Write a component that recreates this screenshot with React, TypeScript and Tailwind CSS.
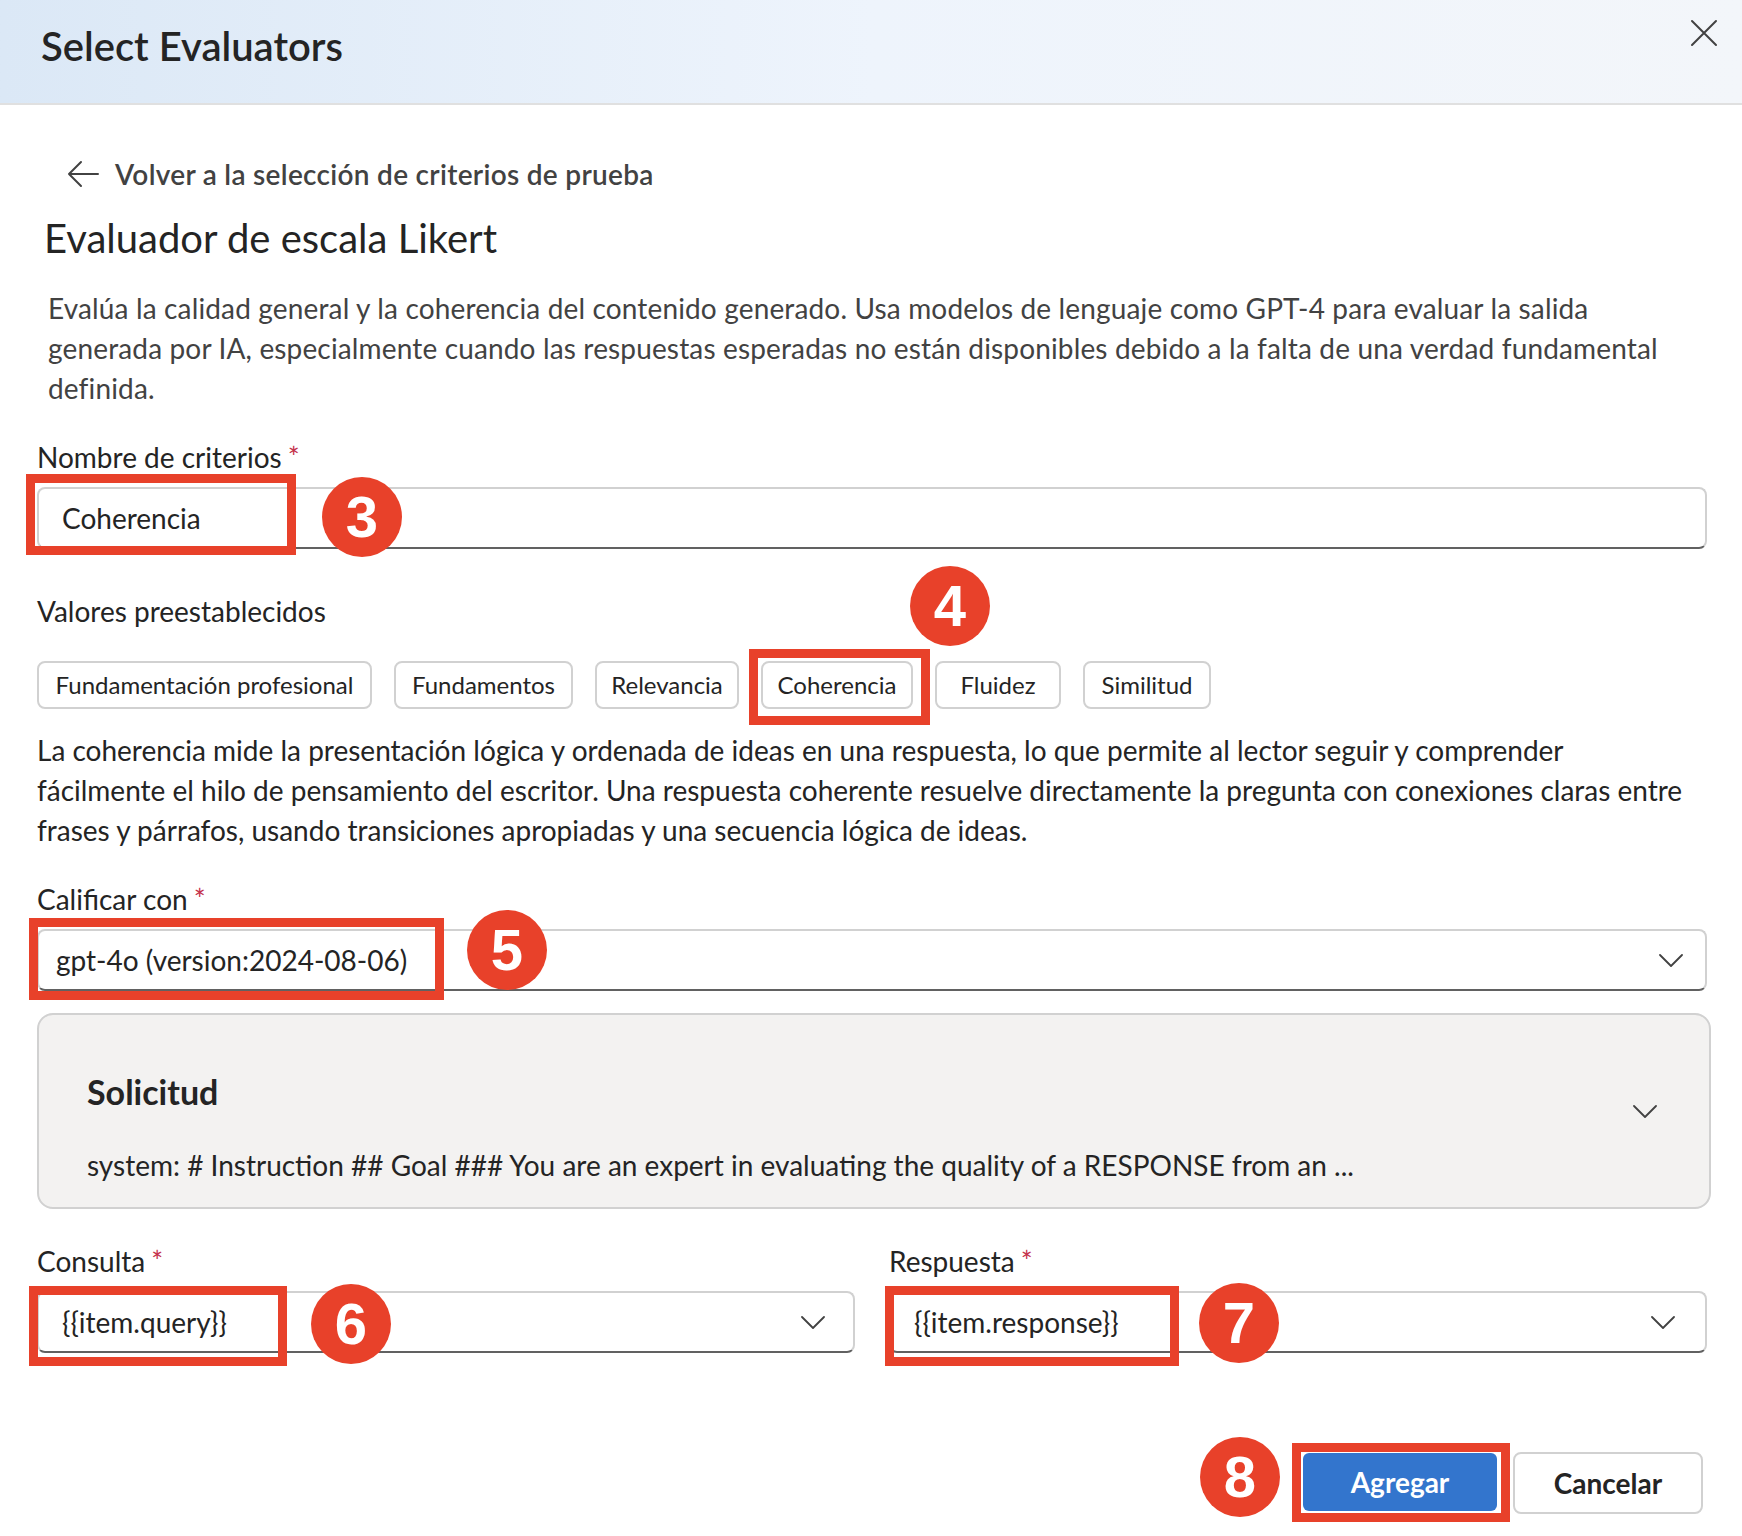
import React from "react";

const RED = "border-[#e8412a]";

function Badge({ n, className }: { n: string; className: string }) {
  return (
    <div
      className={`absolute w-[80px] h-[80px] rounded-full bg-[#e8412a] flex items-center justify-center text-white font-['Liberation_Sans',sans-serif] font-bold text-[58px] leading-none z-20 ${className}`}
    >
      {n}
    </div>
  );
}

function Box({ className }: { className: string }) {
  return <div className={`absolute border-[9px] ${RED} z-10 pointer-events-none ${className}`} />;
}

function Chevron() {
  return (
    <svg width="24" height="13" viewBox="0 0 24 13" fill="none">
      <path d="M1 1 L12 12 L23 1" stroke="#424242" strokeWidth="1.8" strokeLinejoin="round" strokeLinecap="round" />
    </svg>
  );
}

function Label({ text }: { text: string }) {
  return (
    <div className="h-[40px] leading-[40px] text-[28px] text-[#242424]">
      {text}
      <span className="text-[#c4314b] ml-[6px]">*</span>
    </div>
  );
}

export default function App() {
  const chips: { label: string; w: string }[] = [
    { label: "Fundamentación profesional", w: "w-[335px]" },
    { label: "Fundamentos", w: "w-[179px]" },
    { label: "Relevancia", w: "w-[144px]" },
    { label: "Coherencia", w: "w-[152px]" },
    { label: "Fluidez", w: "w-[126px]" },
    { label: "Similitud", w: "w-[128px]" },
  ];
  return (
    <div className="w-[1742px] h-[1536px] bg-white font-['Lato',sans-serif] text-[#242424] relative overflow-hidden">
      {/* Header */}
      <header className="h-[105px] border-b-2 border-[#e0e0e0] bg-linear-to-r from-[#dbe8f6] via-[#eef4fc] to-[#f3f6fa] flex justify-between">
        <h1 className="pl-[41px] pt-[21px] text-[40px] font-semibold leading-[50px] text-[#242424]">
          Select Evaluators
        </h1>
        <button className="mt-[19px] mr-[24px] w-[28px] h-[28px]" aria-label="close">
          <svg width="28" height="28" viewBox="0 0 28 28" fill="none">
            <path d="M2 2 L26 26 M26 2 L2 26" stroke="#424242" strokeWidth="2" strokeLinecap="round" />
          </svg>
        </button>
      </header>

      <main className="pl-[37px] pr-[35px]">
        {/* Back link */}
        <div className="mt-[49px] h-[40px] flex items-center pl-[30px] gap-[16px]">
          <svg width="32" height="28" viewBox="0 0 32 28" fill="none">
            <path d="M14 2 L2 14 L14 26 M2 14 H31" stroke="#424242" strokeWidth="2" strokeLinecap="round" strokeLinejoin="round" />
          </svg>
          <span className="text-[28px] font-semibold text-[#424242] leading-[40px] tracking-[0.3px]">
            Volver a la selección de criterios de prueba
          </span>
        </div>

        <h2 className="mt-[18px] pl-[7px] text-[40px] leading-[52px] text-[#242424]">
          Evaluador de escala Likert
        </h2>

        <p className="mt-[24px] ml-[11px] w-[1636px] text-[28px] leading-[40px] tracking-[0.15px] text-[#424242]">
          Evalúa la calidad general y la coherencia del contenido generado. Usa modelos de lenguaje como GPT-4 para
          evaluar la salida generada por IA, especialmente cuando las respuestas esperadas no están disponibles debido
          a la falta de una verdad fundamental definida.
        </p>

        {/* Nombre de criterios */}
        <div className="mt-[29px]">
          <Label text="Nombre de criterios" />
          <div className="relative mt-[10px] h-[62px] rounded-[8px] border-2 border-[#d1d1d1] border-b-[#616161] flex items-center pl-[23px] text-[28px]">
            Coherencia
            <Box className="-left-[13px] -top-[15px] w-[270px] h-[81px]" />
            <Badge n="3" className="left-[283px] -top-[12px]" />
          </div>
        </div>

        {/* Valores preestablecidos */}
        <div className="mt-[42px] h-[40px] leading-[40px] text-[28px]">Valores preestablecidos</div>
        <div className="mt-[30px] flex gap-[22px]">
          {chips.map((c) => (
            <div
              key={c.label}
              className={`relative h-[48px] ${c.w} rounded-[8px] border-2 border-[#d1d1d1] flex items-center justify-center text-[24px] text-[#242424] bg-white`}
            >
              {c.label}
              {c.label === "Coherencia" && (
                <>
                  <Box className="-left-[14px] -top-[14px] w-[181px] h-[76px]" />
                  <Badge n="4" className="left-[147px] -top-[97px]" />
                </>
              )}
            </div>
          ))}
        </div>

        <p className="mt-[21px] w-[1648px] text-[28px] leading-[40px] text-[#242424]">
          La coherencia mide la presentación lógica y ordenada de ideas en una respuesta, lo que permite al lector
          seguir y comprender fácilmente el hilo de pensamiento del escritor. Una respuesta coherente resuelve
          directamente la pregunta con conexiones claras entre frases y párrafos, usando transiciones apropiadas y una
          secuencia lógica de ideas.
        </p>

        {/* Calificar con */}
        <div className="mt-[29px]">
          <Label text="Calificar con" />
          <div className="relative mt-[10px] h-[62px] rounded-[8px] border-2 border-[#d1d1d1] border-b-[#616161] flex items-center justify-between pl-[17px] pr-[22px] text-[28px]">
            <span>gpt-4o (version:2024-08-06)</span>
            <Chevron />
            <Box className="-left-[10px] -top-[13px] w-[415px] h-[82px]" />
            <Badge n="5" className="left-[428px] -top-[21px]" />
          </div>
        </div>

        {/* Solicitud card */}
        <div className="mt-[22px] mr-[-4px] h-[196px] rounded-[16px] border-2 border-[#d1d1d1] bg-[#f3f2f1] flex items-center justify-between pl-[48px] pr-[52px]">
          <div className="pt-[34px]">
            <div className="text-[34px] font-bold leading-[40px] text-[#242424]">Solicitud</div>
            <div className="mt-[33px] text-[28px] leading-[40px] text-[#242424]">
              system: # Instruction ## Goal ### You are an expert in evaluating the quality of a RESPONSE from an ...
            </div>
          </div>
          <Chevron />
        </div>

        {/* Consulta / Respuesta */}
        <div className="mt-[32px] grid grid-cols-2 gap-x-[34px]">
          <div>
            <Label text="Consulta" />
            <div className="relative mt-[10px] h-[62px] rounded-[8px] border-2 border-[#d1d1d1] border-b-[#616161] flex items-center justify-between pl-[23px] pr-[28px] text-[28px]">
              <span>{"{{item.query}}"}</span>
              <Chevron />
              <Box className="-left-[10px] -top-[7px] w-[258px] h-[80px]" />
              <Badge n="6" className="left-[272px] -top-[9px]" />
            </div>
          </div>
          <div>
            <Label text="Respuesta" />
            <div className="relative mt-[10px] h-[62px] rounded-[8px] border-2 border-[#d1d1d1] border-b-[#616161] flex items-center justify-between pl-[23px] pr-[30px] text-[28px]">
              <span>{"{{item.response}}"}</span>
              <Chevron />
              <Box className="-left-[6px] -top-[7px] w-[294px] h-[80px]" />
              <Badge n="7" className="left-[308px] -top-[10px]" />
            </div>
          </div>
        </div>

        {/* Buttons */}
        <div className="mt-[99px] flex justify-end gap-[16px] pr-[4px]">
          <div className="relative mt-[1px] w-[194px] h-[58px] rounded-[6px] bg-[#3375cd] text-white text-[28px] font-bold flex items-center justify-center">
            Agregar
            <Box className="-left-[11px] -top-[10px] w-[218px] h-[79px]" />
            <Badge n="8" className="-left-[103px] -top-[16px]" />
          </div>
          <div className="w-[190px] h-[62px] rounded-[8px] border-2 border-[#d1d1d1] bg-white text-[28px] font-bold flex items-center justify-center text-[#242424]">
            Cancelar
          </div>
        </div>
      </main>
    </div>
  );
}
